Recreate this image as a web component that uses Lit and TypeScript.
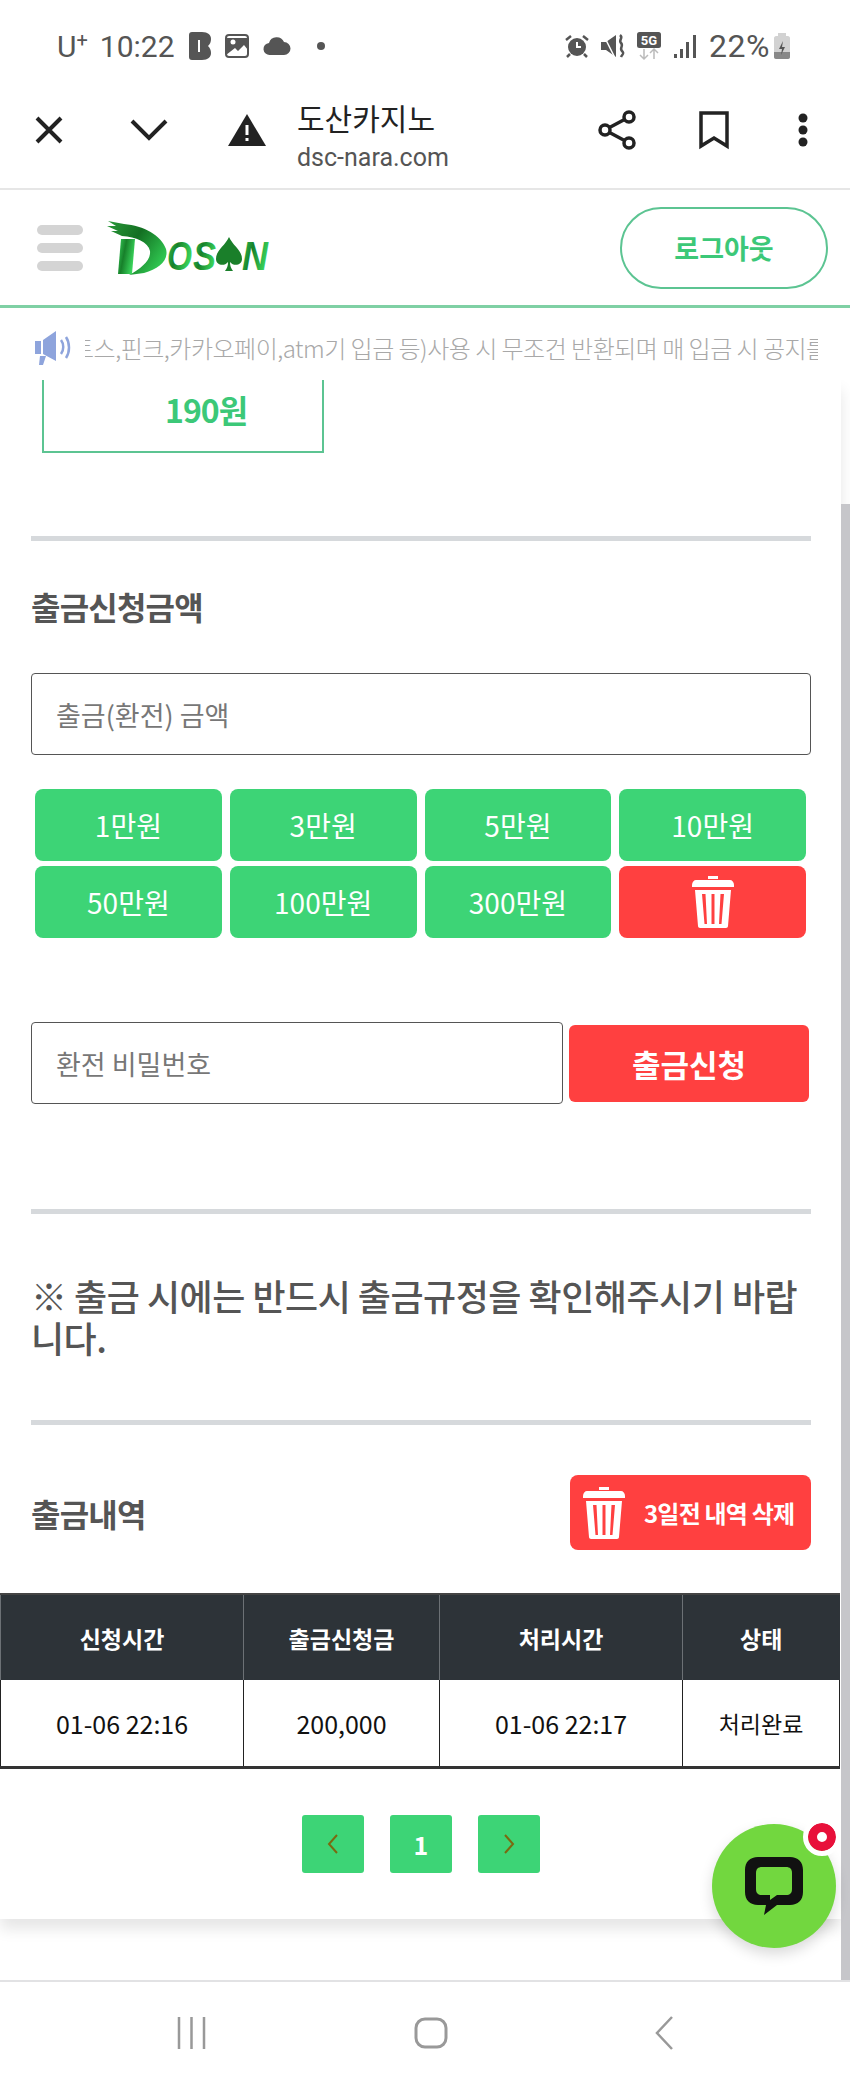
import { LitElement, html, css, svg } from 'lit';
import { customElement } from 'lit/decorators.js';

const amounts = ['1만원', '3만원', '5만원', '10만원', '50만원', '100만원', '300만원'];

// same bin is used on the amount grid and on the delete button
const trash = (w: number, h: number) => html`
  <svg width=${w} height=${h} viewBox="0 0 42 52" fill="#fff">
    <path d="M16 0h10v3h-10z" />
    <path d="M4 4h34c2 0 4 2 4 5v2H0V9c0-3 2-5 4-5z" />
    <path fill-rule="evenodd" d="M3 14h36l-3 36c0 1-1 2-2 2H8c-1 0-2-1-2-2zM10 18l2.500 30h2.500l-1.500-30zM19.500 18v30h3V18zM28.500 18L27 48h2.500L32 18z" />
  </svg>
`;

@customElement('app-root')
export class AppRoot extends LitElement {
  static styles = css`
    :host {
      display: flex;
      flex-direction: column;
      height: 2078px;
      background: #fff;
      font-family: "Noto Sans CJK KR", "Noto Sans", sans-serif;
      position: relative;
      overflow: hidden;
    }
    svg { display: block; flex: none; overflow: visible; }

    .status {
      height: 92px;
      display: flex;
      align-items: center;
      padding: 0 60px 0 57px;
      font-family: Roboto, "Noto Sans", sans-serif;
      font-size: 30px;
      color: #555;
      flex: none;
    }
    .carrier { margin-right: 12px; }
    .carrier sup { font-size: 20px; line-height: 0; vertical-align: 10px; }
    .status .left { display: flex; align-items: center; gap: 14px; margin-left: 14px; }
    .status .right { display: flex; align-items: center; gap: 12px; margin-left: auto; }
    .pct { font-size: 32px; letter-spacing: 0.5px; }

    .toolbar {
      height: 98px;
      box-sizing: border-box;
      border-bottom: 2px solid #e6e6e6;
      padding-bottom: 20px;
      display: flex;
      align-items: center;
      flex: none;
      position: relative;
    }
    .tool { width: 36px; display: flex; justify-content: center; flex: none; }
    .address {
      margin: 4px 0 0 32px;
      align-self: flex-start;
      display: flex;
      flex-direction: column;
      color: #222;
    }
    .address .title { font-size: 30px; line-height: 42px; }
    .address .url {
      margin-top: 2px;
      font-size: 25px;
      line-height: 36px;
      font-family: Roboto, sans-serif;
      color: #555;
    }

    .site {
      height: 118px;
      box-sizing: border-box;
      border-bottom: 3px solid #7fd0a4;
      display: flex;
      align-items: center;
      padding: 0 22px 0 37px;
      flex: none;
    }
    .burger { display: flex; flex-direction: column; gap: 8px; width: 46px; }
    .burger i { height: 10px; border-radius: 5px; background: #d4d4d4; }
    .logo { margin-left: 24px; }
    .logout {
      margin-left: auto;
      width: 208px;
      height: 82px;
      box-sizing: border-box;
      border: 2px solid #5cc492;
      border-radius: 41px;
      display: flex;
      align-items: center;
      justify-content: center;
      color: #3cc878;
      font-size: 27px;
      font-weight: 700;
    }

    .ticker {
      height: 72px;
      box-sizing: border-box;
      display: flex;
      align-items: center;
      padding: 7px 32px 0 35px;
      flex: none;
    }
    .ticker .clip {
      margin-left: 11px;
      overflow: hidden;
      white-space: nowrap;
      flex: 1;
      color: #a8a8a8;
      font-size: 24px;
      font-weight: 300;
      letter-spacing: -0.5px;
    }
    .ticker .clip span { display: inline-block; margin-left: -13px; }

    .scroll { flex: 1; position: relative; overflow: hidden; }
    .thumb {
      position: absolute;
      right: 0;
      top: 124px;
      bottom: 0;
      width: 9px;
      background: #c6c6ca;
    }
    .card {
      width: 841px;
      box-sizing: border-box;
      padding: 0 30px 46px 31px;
      box-shadow: 0 10px 14px rgba(0, 0, 0, 0.1);
    }
    .balance {
      width: 282px;
      height: 73px;
      box-sizing: border-box;
      margin-left: 11px;
      border: 2px solid #5cc492;
      border-top: 0;
      color: #3cc878;
      font-size: 32px;
      font-weight: 700;
      line-height: 58px;
      padding-left: 121px;
      letter-spacing: -1px;
    }
    .rule { height: 5px; background: #d6d9dc; }
    .r1 { margin-top: 83px; }
    .r2 { margin-top: 105px; }
    .r3 { margin-top: 62px; }
    h3 {
      margin: 45px 0 0;
      font-size: 32px;
      line-height: 40px;
      font-weight: 700;
      color: #555;
      letter-spacing: -0.8px;
    }
    .field {
      height: 82px;
      box-sizing: border-box;
      border: 1.500px solid #555;
      border-radius: 4px;
      padding-left: 24px;
      display: flex;
      align-items: center;
      font-size: 27px;
      color: #777;
    }
    .amount { margin-top: 47px; }
    .grid {
      margin: 34px 5px 0 4px;
      display: grid;
      grid-template-columns: repeat(4, 1fr);
      column-gap: 8px;
      row-gap: 5px;
    }
    .grid div {
      height: 72px;
      border-radius: 8px;
      background: #3dd476;
      color: #fff;
      font-size: 28px;
      display: flex;
      align-items: center;
      justify-content: center;
    }
    .grid div.clear { background: #ff4040; }
    .pw { margin-top: 84px; display: flex; align-items: center; }
    .pw .field { width: 532px; }
    .pw .send {
      margin-left: 6px;
      width: 240px;
      height: 77px;
      border-radius: 6px;
      background: #ff4040;
      color: #fff;
      font-size: 31px;
      font-weight: 700;
      display: flex;
      align-items: center;
      justify-content: center;
    }
    .notice {
      margin: 60px 0 0;
      font-size: 36px;
      line-height: 42px;
      font-weight: 500;
      color: #555;
      letter-spacing: -0.5px;
    }
    .history { margin-top: 50px; display: flex; align-items: center; }
    .history h3 { margin: 0; }
    .wipe {
      margin-left: auto;
      width: 241px;
      height: 75px;
      border-radius: 8px;
      background: #ff4040;
      color: #fff;
      font-size: 24px;
      font-weight: 700;
      display: flex;
      align-items: center;
      padding-left: 13px;
      box-sizing: border-box;
      gap: 19px;
      letter-spacing: -0.8px;
      white-space: nowrap;
    }
    table {
      margin: 43px 0 0 -31px;
      width: 839px;
      table-layout: fixed;
      border-collapse: collapse;
      font-size: 25px;
      color: #111;
      text-align: center;
    }
    th {
      height: 85px;
      padding: 0;
      background: #2d3338;
      color: #fff;
      font-size: 23px;
      font-weight: 700;
      border-left: 1px solid #6c7175;
      border-top: 2px solid #444;
    }
    td {
      height: 86px;
      padding: 0;
      border-left: 1px solid #222;
      border-right: 1px solid #222;
      border-bottom: 3px solid #333;
    }
    td.tight { font-size: 23px; }
    .pages { margin-top: 46px; display: flex; justify-content: center; gap: 26px; }
    .pages div {
      width: 62px;
      height: 58px;
      border-radius: 3px;
      background: #3dd476;
      color: #fff;
      font-size: 25px;
      font-weight: 700;
      display: flex;
      align-items: center;
      justify-content: center;
    }

    .nav {
      height: 98px;
      flex: none;
      border-top: 2px solid #e2e2e4;
      box-sizing: border-box;
      display: flex;
      align-items: center;
      justify-content: center;
      padding-top: 6px;
      gap: 206px;
    }

    .chat {
      position: absolute;
      left: 712px;
      top: 1824px;
      width: 124px;
      height: 124px;
      border-radius: 50%;
      background: #72d73f;
      box-shadow: 0 6px 14px rgba(0, 0, 0, 0.15);
      display: flex;
      align-items: center;
      justify-content: center;
    }
    .dot {
      position: absolute;
      left: 96px;
      top: -1px;
      width: 28px;
      height: 28px;
      border: 9px solid #e8103a;
      outline: 5px solid #fff;
      border-radius: 50%;
      background: #fff;
      box-sizing: border-box;
    }
  `;

  private renderStatus() {
    return html`
      <div class="status">
        <span class="carrier">U<sup>+</sup></span>
        <span>10:22</span>
        <div class="left">
          <svg width="22" height="28" viewBox="0 0 22 28"><path fill="#555" d="M3 0h10c6 0 9 3 9 7 0 3-1 5-3 7 2 2 3 4 3 7 0 4-3 7-9 7H3c-2 0-3-1-3-3V3c0-2 1-3 3-3z"/><path fill="#fff" d="M9 8h2v12H9z"/></svg>
          <svg width="24" height="24" viewBox="0 0 24 24"><rect x="1" y="1" width="22" height="22" rx="3" fill="none" stroke="#555" stroke-width="2"/><path fill="#555" d="M1 4h22v12l-4-5-6 6-3-3-9 7z"/><circle cx="8" cy="8" r="2.500" fill="#fff"/></svg>
          <svg width="28" height="18" viewBox="0 0 28 18"><path fill="#555" d="M7 18a6 6 0 0 1-1-12A8 8 0 0 1 21 5a6.500 6.500 0 0 1 0 13z"/></svg>
          <svg width="24" height="10" viewBox="0 0 24 10" style="margin-left:8px"><circle cx="8" cy="5" r="4" fill="#555"/></svg>
        </div>
        <div class="right">
          <svg width="24" height="24" viewBox="0 0 24 24"><circle cx="12" cy="13" r="9" fill="#555"/><path d="M12 8v5h4" fill="none" stroke="#fff" stroke-width="2"/><path stroke="#555" stroke-width="2.500" d="M1 6l5-4M23 6l-5-4M5 20l-3 3M19 20l3 3"/></svg>
          <svg width="24" height="24" viewBox="0 0 24 24"><path fill="#555" d="M0 8h5l10-7v22L5 16H0z"/><path d="M2 0l12 24" stroke="#fff" stroke-width="1.500"/><path d="M19 1c4 3-2 5 1 8s-2 5 1 8 0 3-1 6" fill="none" stroke="#555" stroke-width="2.500"/></svg>
          <svg width="24" height="28" viewBox="0 0 24 28"><rect width="24" height="16" rx="2.500" fill="#555"/><text x="12" y="13" text-anchor="middle" fill="#fff" font-size="13" font-weight="700" font-family="Roboto">5G</text><path d="M7 17v10M3 23l4 4 4-4M17 27V17M13 21l4-4 4 4" fill="none" stroke="#bbb" stroke-width="1.500"/></svg>
          <svg width="24" height="24" viewBox="0 0 24 24" fill="#555"><rect x="1" y="20" width="3" height="4"/><rect x="7" y="15" width="3" height="9"/><rect x="13" y="8" width="3" height="16"/><rect x="20" y="1" width="3" height="23"/></svg>
          <span class="pct">22%</span>
          <svg width="16" height="26" viewBox="0 0 16 26" style="margin-left:-8px"><path fill="#d2d2d2" d="M4 0h8v3h2c1 0 2 1 2 2v19c0 1-1 2-2 2H2c-1 0-2-1-2-2V5c0-1 1-2 2-2h2z"/><path fill="#888" d="M0 19h16v5c0 1-1 2-2 2H2c-1 0-2-1-2-2z"/><path fill="#555" d="M9 8l-4 8h3l-1 6 4-8H8z"/></svg>
        </div>
      </div>
    `;
  }

  private renderToolbar() {
    return html`
      <div class="toolbar">
        <div class="tool" style="margin-left:31px">
          <svg width="30" height="28" viewBox="0 0 30 28"><path d="M3 2l24 24M27 2L3 26" stroke="#222" stroke-width="4" fill="none"/></svg>
        </div>
        <div class="tool" style="margin-left:64px">
          <svg width="38" height="22" viewBox="0 0 38 22"><path d="M2 2l17 17L36 2" stroke="#222" stroke-width="4" fill="none"/></svg>
        </div>
        <div class="tool" style="margin-left:62px">
          <svg width="38" height="32" viewBox="0 0 38 32"><path fill="#222" d="M19 0l19 32H0z"/><path fill="#fff" d="M17.500 11h3v10h-3zM17.500 24h3v3h-3z"/></svg>
        </div>
        <div class="address">
          <span class="title">도산카지노</span>
          <span class="url">dsc-nara.com</span>
        </div>
        <div class="tool" style="margin-left:auto">
          <svg width="38" height="40" viewBox="0 0 38 40"><g fill="none" stroke="#222" stroke-width="3.500"><circle cx="31" cy="7" r="5"/><circle cx="7" cy="20" r="5"/><circle cx="31" cy="33" r="5"/><path d="M11.500 17.500L26.500 9.500M11.500 22.500L26.500 30.500"/></g></svg>
        </div>
        <div class="tool" style="margin-left:61px">
          <svg width="30" height="38" viewBox="0 0 30 38"><path d="M2 2h26v33L15 27 2 35z" fill="none" stroke="#222" stroke-width="3.500"/></svg>
        </div>
        <div class="tool" style="margin-left:53px;margin-right:29px">
          <svg width="10" height="34" viewBox="0 0 10 34" fill="#222"><circle cx="5" cy="5" r="4.500"/><circle cx="5" cy="17" r="4.500"/><circle cx="5" cy="29" r="4.500"/></svg>
        </div>
      </div>
    `;
  }

  private renderLogo() {
    return svg`
      <svg class="logo" width="165" height="56" viewBox="0 0 165 56">
        <defs>
          <linearGradient id="lg" x1="0" y1="0" x2="1" y2="0.4">
            <stop offset="0" stop-color="#36d05a"/>
            <stop offset="0.45" stop-color="#17802a"/>
            <stop offset="1" stop-color="#3ad65c"/>
          </linearGradient>
          <linearGradient id="brush" x1="0" y1="0" x2="1" y2="0.6">
            <stop offset="0" stop-color="#2a9a3a"/>
            <stop offset="0.5" stop-color="#136f22"/>
            <stop offset="1" stop-color="#2fc44f"/>
          </linearGradient>
        </defs>
        <!-- brush stroke of the big initial, with the frayed strands at top left -->
        <path fill="url(#brush)" d="M1 1l16 3C37 6 54 15 59 29c3 11-7 20-22 24l-15 2c13-7 22-15 21-24C41 22 29 17 15 16L4 11l7 0L0 6l9 0z"/>
        <path fill="url(#lg)" d="M14 19h14l-3 35H11z"/>
        <text x="60" y="50" font-family="Liberation Sans" font-weight="700" font-style="italic" font-size="40" fill="url(#lg)" textLength="25" lengthAdjust="spacingAndGlyphs">O</text>
        <text x="86" y="50" font-family="Liberation Sans" font-weight="700" font-style="italic" font-size="40" fill="url(#lg)" textLength="23" lengthAdjust="spacingAndGlyphs">S</text>
        <path fill="#1a7f2a" d="M122 17c4 9 13 13 13 22 0 6-8 8-12 3 0 4 1 6 3 9h-8c2-3 3-5 3-9-4 5-12 3-12-3 0-9 9-13 13-22z"/>
        <text x="135" y="50" font-family="Liberation Sans" font-weight="700" font-style="italic" font-size="40" fill="url(#lg)" textLength="26" lengthAdjust="spacingAndGlyphs">N</text>
      </svg>
    `;
  }

  private renderSite() {
    return html`
      <div class="site">
        <div class="burger"><i></i><i></i><i></i></div>
        ${this.renderLogo()}
        <div class="logout">로그아웃</div>
      </div>
      <div class="ticker">
        <svg width="39" height="36" viewBox="0 0 39 36">
          <path fill="#8ea4dc" d="M0 11h6v13H0zM8 10l13-9v30L8 24z"/>
          <path fill="#8ea4dc" d="M5 26h6l-3 9H4z"/>
          <path d="M26 10c3 4 3 10 0 14M31 7c4 6 4 15 0 21" fill="none" stroke="#8ea4dc" stroke-width="2.500"/>
        </svg>
        <div class="clip"><span>토스,핀크,카카오페이,atm기 입금 등)사용 시 무조건 반환되며 매 입금 시 공지를 확인해주세요</span></div>
      </div>
    `;
  }

  private renderTable() {
    return html`
      <table>
        <colgroup>
          <col style="width:243px" /><col style="width:196px" /><col style="width:243px" /><col style="width:157px" />
        </colgroup>
        <thead>
          <tr><th>신청시간</th><th>출금신청금</th><th>처리시간</th><th>상태</th></tr>
        </thead>
        <tbody>
          <tr><td>01-06 22:16</td><td>200,000</td><td>01-06 22:17</td><td class="tight">처리완료</td></tr>
        </tbody>
      </table>
    `;
  }

  render() {
    return html`
      ${this.renderStatus()}
      ${this.renderToolbar()}
      ${this.renderSite()}
      <div class="scroll">
        <div class="thumb"></div>
        <div class="card">
          <div class="balance">190원</div>
          <div class="rule r1"></div>
          <h3>출금신청금액</h3>
          <div class="field amount">출금(환전) 금액</div>
          <div class="grid">
            ${amounts.map(a => html`<div>${a}</div>`)}
            <div class="clear">${trash(42, 52)}</div>
          </div>
          <div class="pw">
            <div class="field">환전 비밀번호</div>
            <div class="send">출금신청</div>
          </div>
          <div class="rule r2"></div>
          <p class="notice">※ 출금 시에는 반드시 출금규정을 확인해주시기 바랍니다.</p>
          <div class="rule r3"></div>
          <div class="history">
            <h3>출금내역</h3>
            <div class="wipe">${trash(42, 52)}<span>3일전 내역 삭제</span></div>
          </div>
          ${this.renderTable()}
          <div class="pages">
            <div><svg width="14" height="20" viewBox="0 0 14 20"><path d="M11 1L3 10l8 9" fill="none" stroke="#7a6a10" stroke-width="2"/></svg></div>
            <div>1</div>
            <div><svg width="14" height="20" viewBox="0 0 14 20"><path d="M3 1l8 9-8 9" fill="none" stroke="#7a6a10" stroke-width="2"/></svg></div>
          </div>
        </div>
      </div>
      <div class="nav">
        <svg width="32" height="32" viewBox="0 0 32 32"><path d="M3 0v32M15.500 0v32M28 0v32" stroke="#999" stroke-width="2.500"/></svg>
        <svg width="34" height="32" viewBox="0 0 34 32"><rect x="2" y="2" width="30" height="28" rx="9" fill="none" stroke="#999" stroke-width="3"/></svg>
        <svg width="20" height="34" viewBox="0 0 20 34"><path d="M18 1L3 17l15 16" fill="none" stroke="#999" stroke-width="2.500"/></svg>
      </div>
      <div class="chat">
        <svg width="60" height="60" viewBox="0 0 60 60">
          <path fill="#111" fill-rule="evenodd" d="M14 1h32c8 0 13 5 13 13v22c0 8-5 13-13 13H33L20 59l2-10h-8C6 49 1 44 1 36V14C1 6 6 1 14 1zM18 11c-4 0-6 2-6 6v16c0 4 2 6 6 6h8v5l7-5h9c4 0 6-2 6-6V17c0-4-2-6-6-6z"/>
        </svg>
        <div class="dot"></div>
      </div>
    `;
  }
}
